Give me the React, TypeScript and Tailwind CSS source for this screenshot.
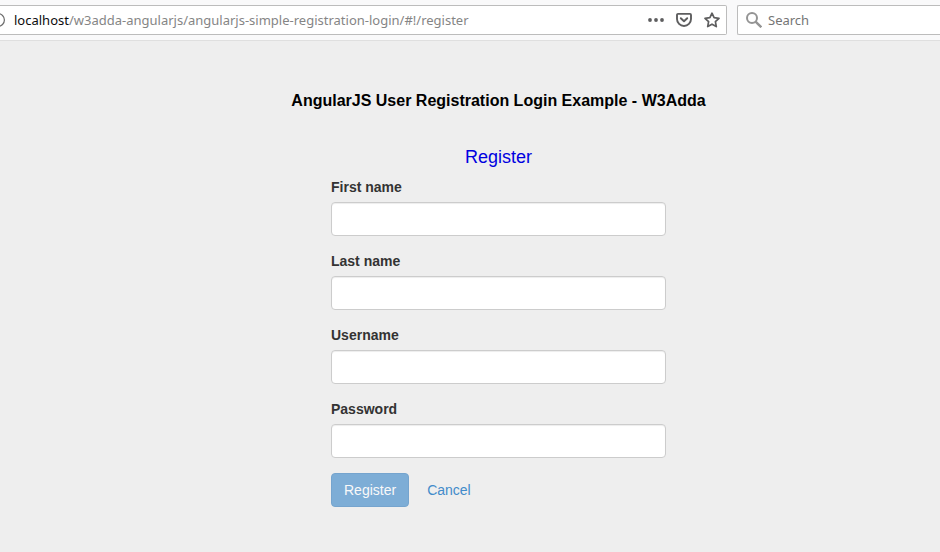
import React, { useState } from 'react';

interface User {
  firstName: string;
  lastName: string;
  username: string;
  password: string;
}

const fields: { name: keyof User; label: string; type: string }[] = [
  { name: 'firstName', label: 'First name', type: 'text' },
  { name: 'lastName', label: 'Last name', type: 'text' },
  { name: 'username', label: 'Username', type: 'text' },
  { name: 'password', label: 'Password', type: 'password' }
];

function BrowserBar() {
  const [query, setQuery] = useState('');

  return (
    <header className="flex gap-2.5 py-[5px] bg-[#f9f9fa] border-b border-[#dfdfdf] overflow-hidden font-['Noto_Sans','Open_Sans',sans-serif] text-[13px]">
      {/* Address bar */}
      <div className="flex flex-1 min-w-0 items-center h-[30px] bg-white border border-l-0 border-[#bcbcbc] rounded-r-xs">
        <svg className="w-[6px] h-4 shrink-0" viewBox="0 0 6 16" fill="none" stroke="#6b6b6b" strokeWidth="1.2">
          <circle cx="-2" cy="8" r="6.4" />
        </svg>
        <div role="textbox" aria-label="Address" className="flex-1 min-w-0 pt-0.5 pl-2 truncate text-[#858585]">
          <span className="text-[#0c0c0d]">localhost</span>/w3adda-angularjs/angularjs-simple-registration-login/#!/register
        </div>
        <div className="flex shrink-0 items-center gap-3 pr-1.5">
          <button type="button" aria-label="Page actions">
            <svg className="w-4 h-4" viewBox="0 0 16 16" fill="#5e5e5f">
              <circle cx="2" cy="8" r="1.9" />
              <circle cx="8" cy="8" r="1.9" />
              <circle cx="14" cy="8" r="1.9" />
            </svg>
          </button>
          <button type="button" aria-label="Save to Pocket">
            <svg className="w-4 h-4" viewBox="0 0 16 16" fill="none" stroke="#5e5e5f" strokeWidth="1.9" strokeLinecap="round" strokeLinejoin="round">
              <path d="M2 1.9h12a1 1 0 0 1 1 1V7a7 7 0 0 1-14 0V2.9a1 1 0 0 1 1-1z" />
              <path d="M4.8 6.2L8 9.3l3.2-3.1" />
            </svg>
          </button>
          <button type="button" aria-label="Bookmark this page">
            <svg className="w-4 h-4" viewBox="0 0 16 16" fill="none" stroke="#5e5e5f" strokeWidth="1.7" strokeLinejoin="round">
              <path d="M8 1.2l2.1 4.5 4.9.6-3.6 3.4.9 4.9L8 12.2l-4.3 2.4.9-4.9L1 6.3l4.9-.6z" />
            </svg>
          </button>
        </div>
      </div>

      {/* Search box */}
      <label className="flex shrink-0 items-center gap-1.5 w-[203px] h-[30px] pl-2 bg-white border border-r-0 border-[#bcbcbc] rounded-l-xs">
        <svg className="w-4 h-4 shrink-0" viewBox="0 0 16 16" fill="none" stroke="#949494" strokeWidth="2">
          <circle cx="6" cy="6" r="5" />
          <path d="M9.6 9.6l5.7 5.7" strokeWidth="2.4" />
        </svg>
        <input
          type="search"
          aria-label="Search"
          placeholder="Search"
          value={query}
          onChange={(e) => setQuery(e.target.value)}
          className="flex-1 min-w-0 pt-0.5 outline-none placeholder:text-[#757575]"
        />
      </label>
    </header>
  );
}

export default function App() {
  const [user, setUser] = useState<User>({ firstName: '', lastName: '', username: '', password: '' });
  const isValid = fields.every(({ name }) => user[name] !== '');

  return (
    <div className="min-h-screen flex flex-col bg-[#eeeeee]">
      <BrowserBar />

      <main className="flex-1 pt-12 pb-10 pl-[57px] font-['Liberation_Sans',Arial,sans-serif] text-sm text-[#333333]">
        <h1 className="mb-[34px] text-center text-base font-bold text-black">
          AngularJS User Registration Login Example - W3Adda
        </h1>

        <form onSubmit={(e) => e.preventDefault()} className="w-full max-w-[335px] mx-auto">
          <h2 className="mb-2.5 text-center text-lg/5 text-[#0000e0]">Register</h2>

          {fields.map(({ name, label, type }) => (
            <div key={name} className="mb-[15px]">
              <label htmlFor={name} className="block mb-[5px] font-bold">
                {label}
              </label>
              <input
                id={name}
                type={type}
                value={user[name]}
                onChange={(e) => setUser({ ...user, [name]: e.target.value })}
                className="block w-full h-[34px] px-3 bg-white border border-[#cccccc] rounded shadow-[inset_0_1px_1px_rgba(0,0,0,0.075)]"
              />
            </div>
          ))}

          <div className="flex items-center gap-1">
            <button
              type="submit"
              disabled={!isValid}
              className="h-[34px] px-3 bg-[#428bca] border border-[#357ebd] rounded text-white disabled:opacity-65"
            >
              Register
            </button>
            <a href="#!/login" className="px-3.5 text-[#428bca]">
              Cancel
            </a>
          </div>
        </form>
      </main>
    </div>
  );
}
